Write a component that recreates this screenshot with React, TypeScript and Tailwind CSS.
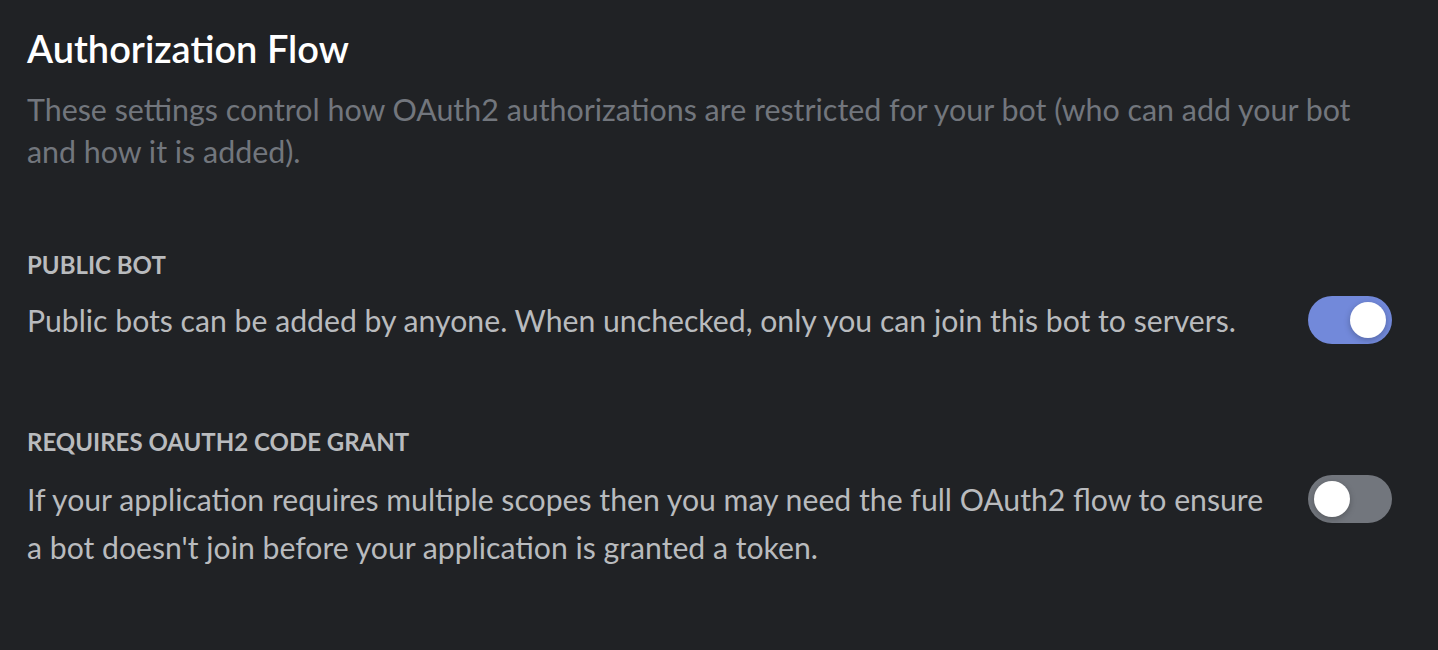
import { useState } from 'react'

function Toggle({ on, onChange }: { on: boolean; onChange: () => void }) {
  return (
    <button
      onClick={onChange}
      className={`relative flex h-[48px] w-[84px] shrink-0 items-center rounded-full px-[6px] transition-colors ${
        on ? 'justify-end bg-[#7289da]' : 'justify-start bg-[#72767d]'
      }`}
    >
      <span className="block h-[36px] w-[36px] rounded-full bg-white shadow-[0_2px_6px_rgba(0,0,0,0.25)]" />
    </button>
  )
}

export default function App() {
  const [publicBot, setPublicBot] = useState(true)
  const [codeGrant, setCodeGrant] = useState(false)

  return (
    <div className="min-h-[650px] w-full bg-[#202225] px-[27px] pt-[22px] font-['Lato',sans-serif]">
      <h2 className="text-[38px] font-semibold leading-[52px] text-white">Authorization Flow</h2>
      <p className="mt-[14px] whitespace-nowrap text-[30.4px] leading-[42px] text-[#72767d]">
        These settings control how OAuth2 authorizations are restricted for your bot (who can add your bot
        <br />
        and how it is added).
      </p>

      <div className="mt-[78px]">
        <div className="text-[24px] font-bold uppercase leading-[30px] text-[#b9bbbe]">Public bot</div>
        <div className="mt-[16px] flex items-start justify-between gap-[40px] pr-[19px]">
          <p className="text-[30.2px] leading-[48px] text-[#b9bbbe]">
            Public bots can be added by anyone. When unchecked, only you can join this bot to servers.
          </p>
          <Toggle on={publicBot} onChange={() => setPublicBot(!publicBot)} />
        </div>
      </div>

      <div className="mt-[83px]">
        <div className="text-[24px] font-bold uppercase leading-[30px] text-[#b9bbbe]">
          Requires OAuth2 code grant
        </div>
        <div className="mt-[18px] flex items-start justify-between gap-[40px] pr-[19px]">
          <p className="whitespace-nowrap text-[30.2px] leading-[48px] text-[#b9bbbe]">
            If your application requires multiple scopes then you may need the full OAuth2 flow to ensure
            <br />
            a bot doesn't join before your application is granted a token.
          </p>
          <Toggle on={codeGrant} onChange={() => setCodeGrant(!codeGrant)} />
        </div>
      </div>
    </div>
  )
}
